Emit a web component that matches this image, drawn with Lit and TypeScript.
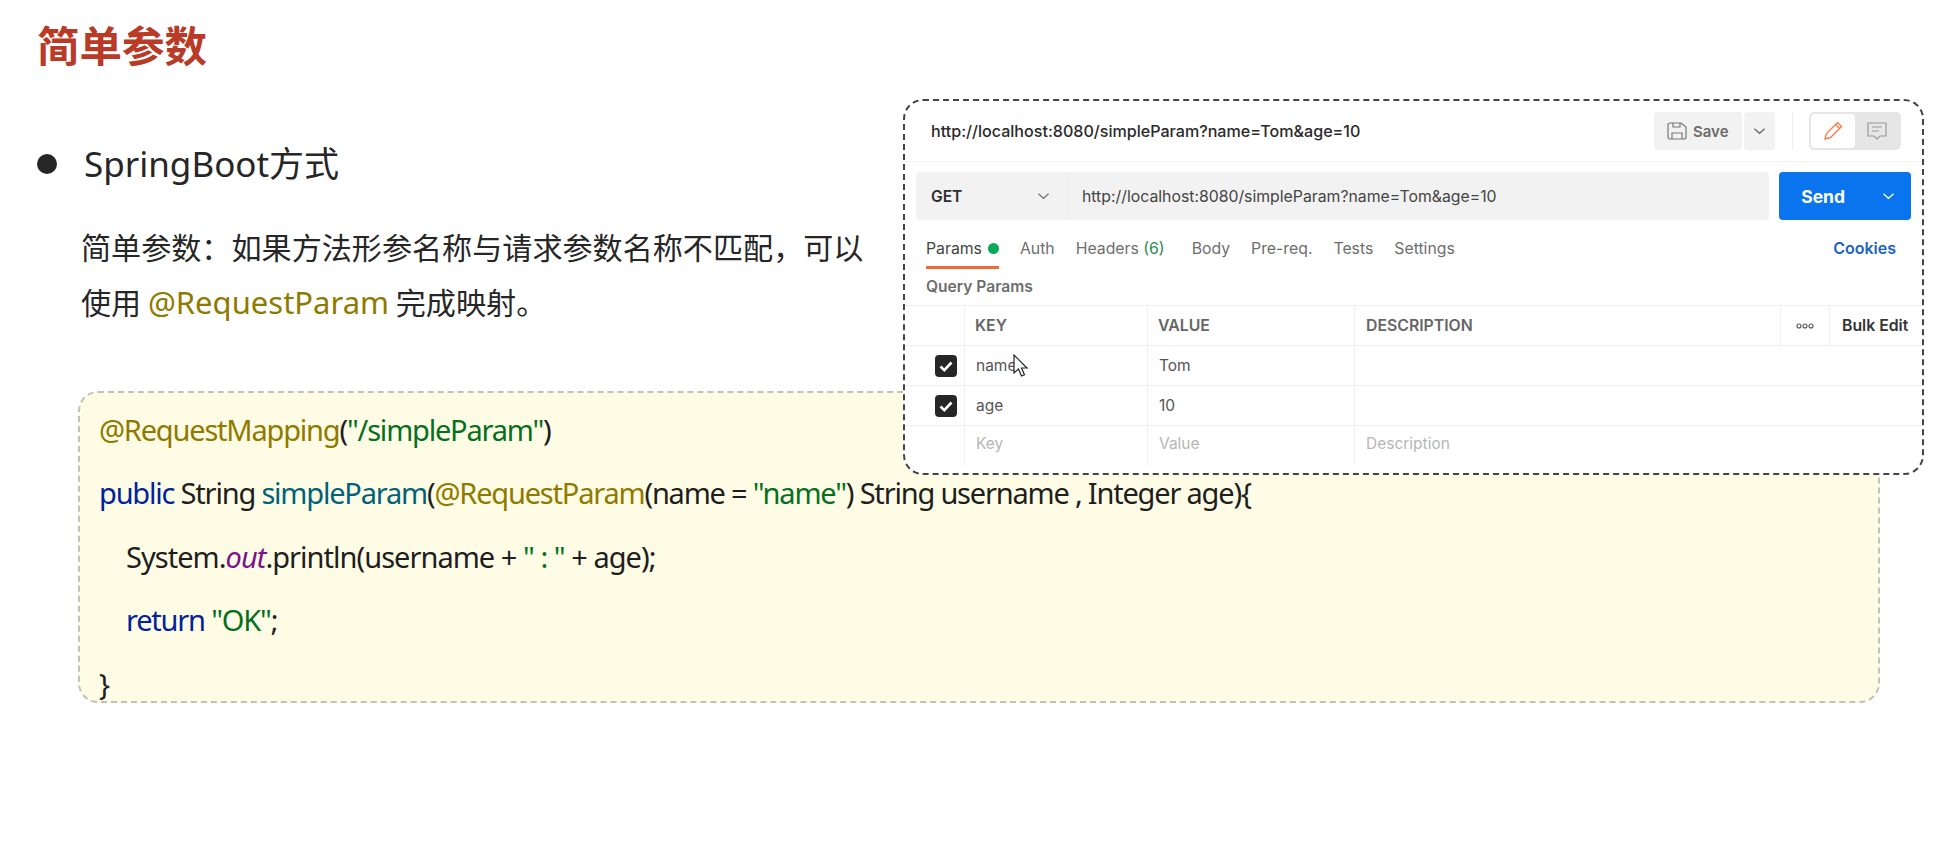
import { LitElement, html, css } from "lit";
import { customElement } from "lit/decorators.js";

const URL = "http://localhost:8080/simpleParam?name=Tom&age=10";
const chev = html`<svg class="chev" viewBox="0 0 14 8"><path d="M1.5 1.5 7 6.5l5.500-5" fill="none" stroke="currentColor" stroke-width="1.3"/></svg>`;
const check = html`<span class="cb"><svg viewBox="0 0 22 22"><path d="M5.500 11.500l3.800 3.600 7.200-7.600" fill="none" stroke="#fff" stroke-width="2.6"/></svg></span>`;

@customElement("app-root")
export class AppRoot extends LitElement {
  static styles = css`
    :host { display: block; position: relative; width: 1948px; height: 856px; overflow: hidden; background: #fff;
      font-family: "Noto Sans", "Noto Sans CJK SC", sans-serif; color: #262626; }
    .slide { display: flex; flex-direction: column; padding: 14px 68px 0 37px; }
    h1 { margin: 0; font: 700 42.5px/60px "Noto Sans CJK SC", sans-serif; color: #b93a26; }
    .bullet { display: flex; align-items: center; gap: 27px; margin-top: 66px; font-size: 35px; line-height: 48px; }
    .bullet i { width: 20px; height: 20px; border-radius: 50%; background: #262626; }
    .para { margin: 31px 0 0 44px; width: 830px; font-size: 30.1px; line-height: 54.5px; font-family: "Noto Sans CJK SC", sans-serif; }
    .para .ann { font-family: "Noto Sans", sans-serif; font-size: 31px; color: #8f7a00; }
    .code { margin: 62px 0 0 41px; height: 312px; box-sizing: border-box; padding: 5px 0 0 19px; border: 2px dashed #c2c2b6;
      border-radius: 20px; background: #fffce5; font-size: 29px; line-height: 63.4px; letter-spacing: -1.2px; color: #1e1e1e; }
    .code div { white-space: pre; }
    .code div.in { padding-left: 27px; }
    .code div.wide { letter-spacing: -0.97px; }
    .a { color: #8f7a00; } .s { color: #04701f; } .k { color: #00229c; } .m { color: #00627a; }
    .o { color: #7d108c; font-style: italic; }

    .panel { position: absolute; left: 903px; top: 99px; width: 1021px; height: 376px; box-sizing: border-box; background: #fff;
      border: 2px dashed #444; border-radius: 20px; font-family: Inter, sans-serif; font-size: 15.8px; color: #555; overflow: hidden; }
    .top { display: flex; align-items: center; box-sizing: border-box; height: 61px; padding: 0 21px 0 26px; border-bottom: 1px solid #f4f4f4; }
    .top .t { flex: 1; color: #2a2a2a; font-weight: 500; font-size: 16.1px; }
    .save { display: flex; align-items: center; gap: 6px; height: 38px; width: 88px; box-sizing: border-box; padding-left: 13px; background: #f2f2f2; border-radius: 3px; font-weight: 600; color: #6b6b6b; font-size: 15px; }
    .savec { display: flex; align-items: center; justify-content: center; margin-left: 2px; height: 38px; width: 31px; background: #f2f2f2; border-radius: 3px; color: #666; }
    .sep { width: 1px; height: 38px; background: #eee; margin: 0 16px 0 17px; }
    .toggle { display: flex; width: 92px; height: 38px; box-sizing: border-box; padding: 2px; background: #e6e6e6; border-radius: 5px; }
    .toggle span { display: flex; align-items: center; justify-content: center; width: 44px; border-radius: 4px; }
    .toggle .on { background: #fff; }
    .chev { width: 13px; height: 8px; }
    .bar { display: flex; gap: 10px; padding: 10px 11px 0 11px; }
    .url { display: flex; width: 855px; height: 48px; background: #f2f2f2; border-radius: 4px; align-items: center; }
    .method { display: flex; align-items: center; justify-content: space-between; box-sizing: border-box; width: 151px; height: 100%; padding: 0 16px 0 15px; border-right: 1px solid #ececec; font-weight: 600; color: #2e2e2e; font-size: 15.6px; }
    .method .chev { color: #777; }
    .url .u { margin-left: 15px; color: #444; font-size: 15.8px; }
    .send { display: flex; align-items: center; justify-content: space-between; box-sizing: border-box; width: 132px; height: 48px; padding: 0 16px 0 22px; background: #0a74ef; border-radius: 4px; color: #fff; font-weight: 700; font-size: 17.5px; }
    .tabs { display: flex; height: 56px; align-items: center; padding: 0 26px 0 21px; color: #6e6e6e; }
    .tab { position: relative; }
    .tab.active { color: #444; display: flex; align-items: center; gap: 6px; }
    .tab.active::after { content: ""; position: absolute; left: 0; right: 0; top: 27px; height: 3px; background: #f26b36; }
    .tab.active b { width: 11px; height: 11px; border-radius: 50%; background: #0aa858; }
    .tab em { font-style: normal; color: #2f8a55; }
    .auth { margin-left: 21px; } .head { margin-left: 21px; } .body { margin-left: 27px; } .rest { margin-left: 21px; }
    .spacer { flex: 1; }
    .cookies { color: #1c62c4; font-weight: 600; font-size: 16px; }
    .qp { height: 29px; padding-left: 21px; line-height: 22px; font-weight: 600; font-size: 15.6px; color: #6d6d6d; }
    .row { display: grid; box-sizing: border-box; grid-template-columns: 60px 183px 207px 426px 49px 1fr; height: 40px; border-top: 1px solid #efefef; }
    .row > div { display: flex; align-items: center; padding-left: 11px; font-size: 15.5px; color: #555; border-right: 1px solid #efefef; }
    .row > div:first-child { padding-left: 30px; }
    .row > div.x { border-right: 0; }
    .row.h > div { font-weight: 600; color: #666; padding-left: 10px; font-size: 15.8px; }
    .row.h > div.d { padding-left: 11px; }
    .row .p { color: #b6b6b6; font-weight: 400; padding-bottom: 4px; }
    .row.h .more { color: #555; padding-left: 0; justify-content: center; }
    .row.h .bulk { color: #333; font-weight: 600; padding-left: 12px; font-size: 15.8px; white-space: nowrap; }
    .cb { display: block; width: 22px; height: 22px; border-radius: 4px; background: #262626; }
    .cb svg { display: block; }
    .cursor { position: absolute; left: 108px; top: 253px; width: 16px; height: 24px; }
  `;

  render() {
    return html`
      <div class="slide">
        <h1>简单参数</h1>
        <div class="bullet"><i></i><span>SpringBoot方式</span></div>
        <div class="para">简单参数：如果方法形参名称与请求参数名称不匹配，可以<br />使用 <span class="ann">@RequestParam</span> 完成映射。</div>
        <div class="code">
          <div><span class="a">@RequestMapping</span>(<span class="s">"/simpleParam"</span>)</div>
          <div><span class="k">public</span> String <span class="m">simpleParam</span>(<span class="a">@RequestParam</span>(name = <span class="s">"name"</span>) String username , Integer age){</div>
          <div class="in wide">System.<span class="o">out</span>.println(username + <span class="s">" : "</span> + age);</div>
          <div class="in"><span class="k">return</span> <span class="s">"OK"</span>;</div>
          <div>}</div>
        </div>
      </div>
      <div class="panel">
        <div class="top">
          <span class="t">${URL}</span>
          <span class="save"><svg width="20" height="18" viewBox="0 0 20 18" fill="none" stroke="#777" stroke-width="1.2"><path d="M1 3a2 2 0 0 1 2-2h11l5 4v10a2 2 0 0 1-2 2H3a2 2 0 0 1-2-2z"/><path d="M6 1v4h7V1M5 17v-6h10v6"/></svg>Save</span>
          <span class="savec">${chev}</span>
          <span class="sep"></span>
          <span class="toggle">
            <span class="on"><svg width="22" height="22" viewBox="0 0 22 22" fill="none" stroke="#f08050" stroke-width="1.4"><path d="M3 19l1.500-5.500L15.500 2.500l4 4L8.500 17.500z"/><path d="M13.500 4.500l4 4"/></svg></span>
            <span><svg width="20" height="18" viewBox="0 0 20 18" fill="none" stroke="#999" stroke-width="1.2"><path d="M1 1h18v13h-6l-3 3-3-3H1z"/><path d="M5 5h10M5 9h7"/></svg></span>
          </span>
        </div>
        <div class="bar">
          <div class="url"><div class="method">GET${chev}</div><span class="u">${URL}</span></div>
          <div class="send">Send${chev}</div>
        </div>
        <div class="tabs">
          <span class="tab active">Params<b></b></span>
          <span class="tab auth">Auth</span>
          <span class="tab head">Headers <em>(6)</em></span>
          <span class="tab body">Body</span>
          <span class="tab rest">Pre-req.</span>
          <span class="tab rest">Tests</span>
          <span class="tab rest">Settings</span>
          <span class="spacer"></span>
          <span class="cookies">Cookies</span>
        </div>
        <div class="qp">Query Params</div>
        <div class="row h"><div></div><div>KEY</div><div>VALUE</div><div class="d">DESCRIPTION</div><div class="more"><svg width="18" height="6" viewBox="0 0 18 6" fill="none" stroke="#555" stroke-width="1.1"><circle cx="3" cy="3" r="2"/><circle cx="9" cy="3" r="2"/><circle cx="15" cy="3" r="2"/></svg></div><div class="bulk x">Bulk Edit</div></div>
        <div class="row"><div>${check}</div><div>name</div><div>Tom</div><div class="x"></div><div class="x"></div><div class="x"></div></div>
        <div class="row"><div>${check}</div><div>age</div><div>10</div><div class="x"></div><div class="x"></div><div class="x"></div></div>
        <div class="row"><div></div><div class="p">Key</div><div class="p">Value</div><div class="p x">Description</div><div class="x"></div><div class="x"></div></div>
        <svg class="cursor" viewBox="0 0 16 24"><path d="M1 1v18l4.500-4 3 7 3-1.300-3-6.700H14z" fill="#fff" stroke="#222" stroke-width="1.200"/></svg>
      </div>
    `;
  }
}
